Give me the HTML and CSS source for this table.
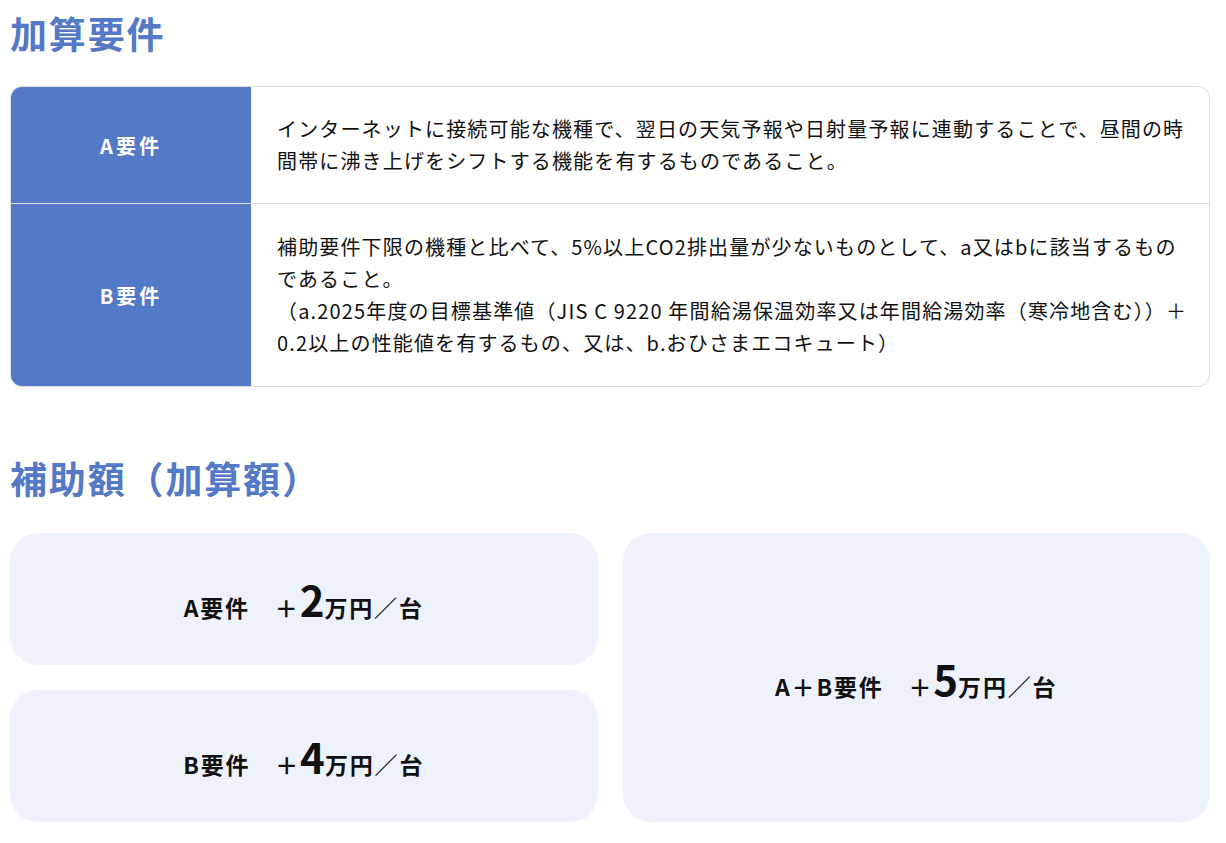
FILE: index.html
```html
<!DOCTYPE html>
<html lang="ja">
<head>
  <meta charset="UTF-8">
  <meta name="viewport" content="width=device-width, initial-scale=1.0">
  <title>加算要件</title>
  <link rel="stylesheet" href="styles.css">
</head>
<body>
<div class="page">
  <!-- 加算要件 -->
  <h2 class="section-title">加算要件</h2>
  <div class="req-table">
    <div class="req-row">
      <div class="req-label">A要件</div>
      <div class="req-body">インターネットに接続可能な機種で、翌日の天気予報や日射量予報に連動することで、昼間の時間帯に沸き上げをシフトする機能を有するものであること。</div>
    </div>
    <div class="req-row">
      <div class="req-label">B要件</div>
      <div class="req-body">補助要件下限の機種と比べて、5%以上CO2排出量が少ないものとして、a又はbに該当するものであること。<br>（a.2025年度の目標基準値（JIS C 9220 年間給湯保温効率又は年間給湯効率（寒冷地含む））＋0.2以上の性能値を有するもの、又は、b.おひさまエコキュート）</div>
    </div>
  </div>

  <!-- 補助額 -->
  <h2 class="section-title section-title--second">補助額（加算額）</h2>
  <div class="amount-grid">
    <div class="amount-card">
      <p>A要件　＋<span class="num">2</span>万円／台</p>
    </div>
    <div class="amount-card amount-card--tall">
      <p>A＋B要件　＋<span class="num">5</span>万円／台</p>
    </div>
    <div class="amount-card">
      <p>B要件　＋<span class="num">4</span>万円／台</p>
    </div>
  </div>
</div>
</body>
</html>
```

FILE: styles.css
```css
* {
  margin: 0;
  padding: 0;
  box-sizing: border-box;
}

:root {
  --blue: #5479c7;
  --card-bg: #edf2fb;
  --line: #dddddd;
  --text: #111;
}

body {
  font-family: "Noto Sans CJK JP", "Noto Sans", sans-serif;
  color: var(--text);
  background: #fff;
  letter-spacing: 0.05em;
}

.page {
  width: 1200px;
  margin-left: 10px;
  padding-top: 9px;
}

/* Headings */
.section-title {
  font-size: 37px;
  font-weight: 700;
  line-height: 49px;
  letter-spacing: 0.05em;
  color: var(--blue);
  margin-bottom: 28px;
}

.section-title--second {
  margin-top: 67px;
  margin-bottom: 30px;
}

/* Requirement table */
.req-table {
  border: 1px solid var(--line);
  border-radius: 12px;
  overflow: hidden;
}

.req-row {
  display: grid;
  grid-template-columns: 240px 1fr;
}

.req-row + .req-row {
  border-top: 1px solid var(--line);
}

.req-label {
  background-color: var(--blue);
  color: #fff;
  font-size: 20px;
  font-weight: 700;
  letter-spacing: 0.15em;
  display: flex;
  align-items: center;
  justify-content: center;
}

.req-body {
  padding: 26px 21px 26px 26px;
  font-size: 20px;
  line-height: 32px;
  letter-spacing: 1.15px;
}

.req-row:last-child .req-body {
  padding-top: 27px;
  padding-bottom: 27px;
}

/* Amount cards */
.amount-grid {
  display: grid;
  grid-template-columns: 1fr 1fr;
  grid-template-rows: 132px 132px;
  gap: 25px;
}

.amount-card {
  background-color: var(--card-bg);
  border-radius: 28px;
  display: flex;
  align-items: center;
  justify-content: center;
}

.amount-card--tall {
  grid-row: span 2;
}

.amount-card p {
  font-size: 23px;
  font-weight: 700;
  letter-spacing: 0.08em;
  padding-top: 4px;
}

.amount-card .num {
  font-size: 42px;
  line-height: 1;
  letter-spacing: 0;
}
```
